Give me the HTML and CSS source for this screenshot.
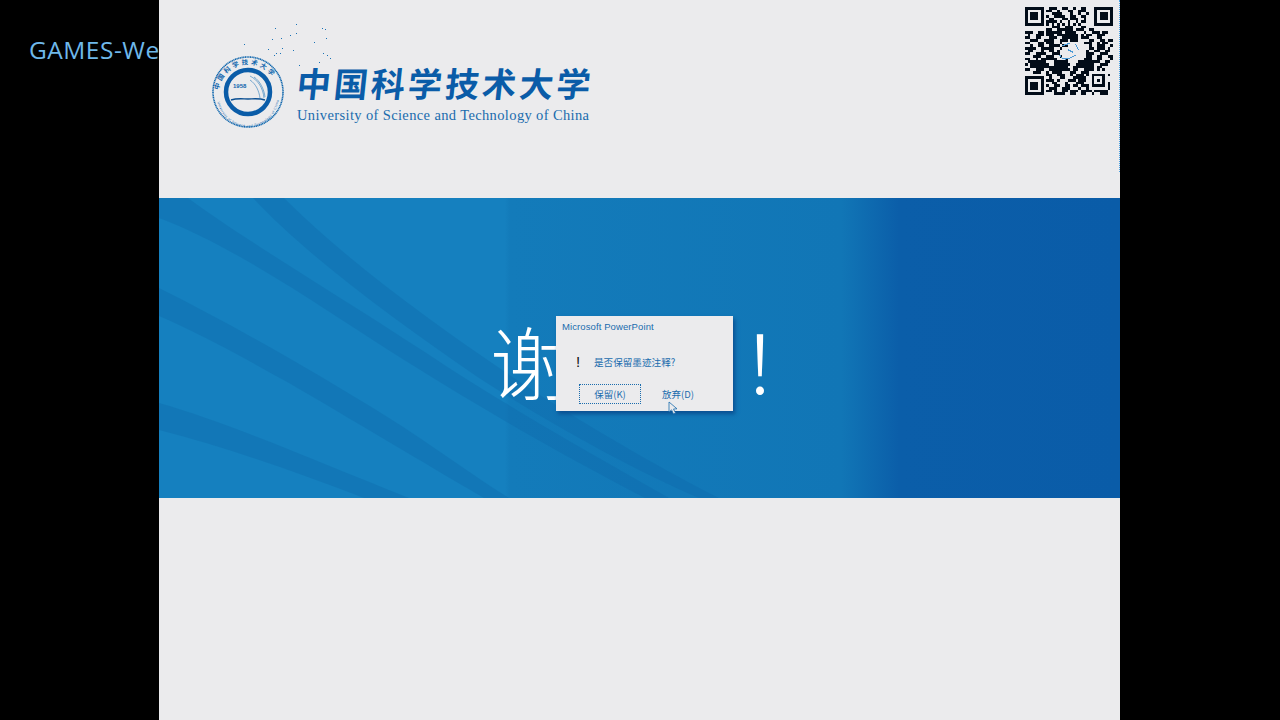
FILE: index.html
```html
<!DOCTYPE html>
<html lang="zh">
<head>
<meta charset="utf-8">
<title>GAMES-Webinar</title>
<link rel="stylesheet" href="styles.css">
</head>
<body>
<div class="stage">
  <aside class="side"><span class="side-title">GAMES-Webinar</span></aside>
  <main class="slide">
    <header class="slide-head">
      <div class="logo">
        <svg class="seal" viewBox="0 0 72 72" aria-hidden="true">
          <defs>
            <path id="sealTop" d="M6.500 38a29.500 29.500 0 1 1 59 0"/>
            <path id="sealBottom" d="M5 40a31 31 0 0 0 62 0"/>
          </defs>
          <circle cx="36" cy="36" r="35" class="seal-line"/>
          <circle cx="36" cy="36" r="22" class="seal-line-thin"/>
          <text class="seal-text"><textPath href="#sealTop" startOffset="4">中国科学技术大学</textPath></text>
          <text class="seal-text-en"><textPath href="#sealBottom" startOffset="6">University of Science and Technology of China</textPath></text>
          <text x="21" y="32" class="seal-year">1958</text>
          <path class="seal-wave" d="M19 44c6-2 12-1 17-1s11-1 17 1"/>
          <path class="seal-rays" d="M38 20c8 4 13 12 14 22M42 21c6 4 10 12 11 20M38 24c6 4 9 11 10 18"/>
        </svg>
        <div class="logo-words">
          <div class="logo-cn">中国科学技术大学</div>
          <div class="logo-en">University of Science and Technology of China</div>
        </div>
        <svg class="sparkles" viewBox="0 0 90 50" aria-hidden="true">
          <path d="M33 8h1v1h-1zM54 4h1v1h-1zM54 13h1v1h-1zM48 15h1v1h-1zM39 18h1v1h-1zM30 19h1v1h-1zM2 24h1v1H2zM26 29h1v1h-1zM40 28h1v1h-1zM38 33h1v1h-1zM34 33h1v1h-1zM32 35h1v1h-1zM51 30h1v1h-1zM72 22h1v1h-1zM80 8h1v1h-1zM83 9h1v1h-1zM84 18h1v1h-1zM81 33h1v1h-1zM85 35h1v1h-1zM88 38h1v1h-1zM77 42h1v1h-1zM57 45h1v1h-1z"/>
        </svg>
      </div>
      <div class="qr-box">
        <svg class="qr" viewBox="0 0 33 33" shape-rendering="crispEdges" aria-hidden="true">
          <path class="qr-finder" d="M0 0h7v7H0zM1 1v5h5V1zM2 2h3v3H2zM26 0h7v7h-7zM27 1v5h5V1zM28 2h3v3h-3zM0 26h7v7H0zM1 27v5h5v-5zM2 28h3v3H2z" fill-rule="evenodd"/>
          <path class="qr-data" d="M9 .5h3m2 0h2m2 0h1m2 0h2M8 1.500h2m2 0h1m3 0h2m2 0h3M10 2.500h4m3 0h1m2 0h1m2 0h1M8 3.500h1m2 0h4m2 0h2m2 0h2M9 4.500h2m3 0h2m1 0h3m2 0h1M8 5.500h4m1 0h1m2 0h1m2 0h1m1 0h2M8 6.500h1m1 0h1m1 0h1m1 0h1m1 0h1m1 0h1m1 0h1M10 7.500h3m2 0h3m3 0h2M8 8.500h2m2 0h4m3 0h3m2 0h2M0 9.500h3m2 0h2m2 0h5m3 0h2m3 0h1m2 0h3m1 0h2M1 10.500h1m2 0h3m2 0h2m1 0h6m3 0h1m1 0h2m2 0h3M0 11.500h2m2 0h2m3 0h3m2 0h4m3 0h3m3 0h2M2 12.500h3m2 0h4m2 0h3m8 0h2m2 0h2m1 0h2M0 13.500h2m3 0h2m1 0h3m2 0h1m8 0h3m2 0h1m1 0h2M2 14.500h1m2 0h2m2 0h4m1 0h2m8 0h1m2 0h3m2 0h2M0 15.500h4m2 0h5m2 0h1m10 0h2m1 0h3m1 0h1M1 16.500h2m3 0h1m2 0h2m1 0h1m10 0h1m2 0h2m2 0h2M0 17.500h2m2 0h4m2 0h3m10 0h3m2 0h3M3 18.500h3m2 0h3m2 0h1m9 0h2m2 0h2m2 0h3M0 19.500h2m2 0h1m1 0h6m3 0h1m6 0h3m2 0h2m3 0h1M1 20.500h2m2 0h3m3 0h5m4 0h2m2 0h4m2 0h2M0 21.500h1m2 0h2m2 0h2m2 0h6m2 0h3m1 0h3m2 0h3M2 22.500h3m3 0h3m2 0h3m2 0h4m2 0h2m1 0h2M0 23.500h2m2 0h3m2 0h2m2 0h4m1 0h2m2 0h4m1 0h1m1 0h1M3 24.500h3m2 0h1m2 0h3m3 0h2m2 0h3m2 0h3M8 25.500h2m2 0h3m2 0h1m1 0h3m1 0h3m3 0h3M9 26.500h1m3 0h2m3 0h4m2 0h1m3 0h1m1 0h1M8 27.500h3m1 0h1m3 0h3m2 0h2m1 0h1m1 0h1m1 0h3M10 28.500h2m3 0h1m3 0h3m2 0h1m3 0h1m1 0h2M8 29.500h1m2 0h2m2 0h2m1 0h2m1 0h4m1 0h3m2 0h1M9 30.500h3m2 0h3m3 0h1m2 0h2m2 0h2m2 0h1M8 31.500h2m1 0h1m2 0h2m1 0h3m1 0h4m1 0h5M11 32.500h4m2 0h2m2 0h2m2 0h1m2 0h3"/>
          <path class="qr-finder" d="M15 7h3v5h-3zM17 10h3v3h-3zM2 20h6v3H2zM21 20h5v3h-5zM8 9h3v2H8zM10 22h3v3h-3zM20 26h3v2h-3z"/>
          <rect class="qr-clear" x="24" y="24" width="7" height="7"/>
          <path class="qr-finder" d="M25 25h5v5h-5zM26 26v3h3v-3zM27 27h1v1h-1z" fill-rule="evenodd"/>
          <path class="qr-mark" d="M14 14.500l3-1M13 18c1 2 3 2 6 0M16 16l2 1M19 14l1 2"/>
        </svg>
      </div>
    </header>
    <section class="band">
      <svg class="band-art" viewBox="0 0 961 300" preserveAspectRatio="none" aria-hidden="true">
        <path class="stripe" d="M0 0H29C90 45 200 110 290 170C360 215 440 260 510 300H486C400 255 330 215 250 165C170 115 80 50 0 20Z"/>
        <path class="stripe" d="M94 0H125C190 65 280 130 370 190C440 235 510 275 560 300H540C470 270 390 225 320 180C240 125 150 60 94 0Z"/>
        <path class="stripe" d="M0 90C70 125 150 170 230 220C270 245 310 275 350 300H325C265 265 190 220 130 185C85 160 40 135 0 118Z"/>
        <path class="stripe" d="M0 205C70 225 150 260 250 300H205C140 275 70 250 0 232Z"/>
      </svg>
      <div class="thanks">谢谢！</div>
      <div class="dialog">
        <div class="dialog-title">Microsoft PowerPoint</div>
        <div class="dialog-msg">
          <span class="dialog-mark">!</span>
          <span>是否保留墨迹注释?</span>
        </div>
        <div class="dialog-actions">
          <span class="btn btn-default">保留(K)</span>
          <span class="btn">放弃(D)</span>
        </div>
        <svg class="cursor" viewBox="0 0 10 14" aria-hidden="true">
          <path d="M1 1v10l2.500-2.200L5.500 13l2-1-2-4 3.500-.2z"/>
        </svg>
      </div>
    </section>
    <div class="slide-foot"></div>
  </main>
</div>
</body>
</html>
```
FILE: styles.css
```css
* { box-sizing: border-box; }
html, body { margin: 0; height: 100%; background: #000; }
.stage { display: flex; width: 1280px; height: 720px; overflow: hidden; background: #000; }
.side { width: 159px; flex: none; overflow: hidden; padding: 33px 0 0 29px; white-space: nowrap; }
.side-title { font: 24.500px/34px "Open Sans", "Liberation Sans", sans-serif; color: #6fb8ea; letter-spacing: .5px; }
.slide { width: 961px; flex: none; display: flex; flex-direction: column; background: #ebebed; }
.slide-head { position: relative; height: 198px; flex: none; display: flex; justify-content: space-between; align-items: flex-start; padding-left: 53px; }
.logo { display: flex; align-items: flex-start; gap: 13px; padding-top: 56px; }
.seal { width: 72px; height: 72px; flex: none; }
.seal-line { fill: none; stroke: #0f66ad; stroke-width: 1.6; stroke-dasharray: 1.200 .5; }
.seal-line-thin { fill: #ebebed; stroke: #0a5ca8; stroke-width: 4.500; }
.seal-text { font: 700 6.500px "Noto Sans CJK SC", sans-serif; fill: #0f66ad; letter-spacing: 2.500px; }
.seal-text-en { font: 3.300px "Liberation Sans", sans-serif; fill: #0f66ad; letter-spacing: .42px; }
.seal-year { font: 700 6px "Liberation Sans", sans-serif; fill: #0f66ad; }
.seal-wave { fill: none; stroke: #0a4f92; stroke-width: 1.400; }
.seal-rays { fill: none; stroke: #2a7ab8; stroke-width: .6; }
.logo-words { display: flex; flex-direction: column; padding-top: 7px; }
.logo-cn { font: 700 34px/40px "Noto Sans CJK SC", sans-serif; color: #0a5ca8; letter-spacing: 3.100px; white-space: nowrap; transform: skewX(-6deg); }
.logo-en { font: 14.500px/18px "Liberation Serif", serif; color: #1a6cad; white-space: nowrap; letter-spacing: .37px; margin-top: 3px; }
.sparkles { position: absolute; left: 83px; top: 20px; width: 90px; height: 50px; fill: #1a72b5; }
.qr-box { height: 172px; padding: 7px 6px 0 0; border-right: 1px dotted #4a9fe0; }
.qr { display: block; width: 88px; height: 88px; filter: drop-shadow(.8px .8px 0 #1578c4); }
.qr-finder { fill: #020c18; }
.qr-data { fill: none; stroke: #020c18; stroke-width: 1; }
.qr-clear { fill: #ebebed; }
.qr-mark { fill: none; stroke: #4a9ad6; stroke-width: .4; }
.band { position: relative; height: 300px; flex: none; overflow: hidden; background: linear-gradient(90deg, #1580bf 0, #1580bf 36%, #137bba 36.500%, #1176b6 71%, #0b5ea9 77%, #0a5ca8 100%); }
.band-art { position: absolute; inset: 0; width: 100%; height: 100%; }
.stripe { fill: #0d66aa; opacity: .35; }
.thanks { position: absolute; left: 331px; top: 116px; font: 300 80px/90px "Noto Sans CJK SC", sans-serif; color: #fff; letter-spacing: 45px; white-space: nowrap; }
.dialog { position: absolute; left: 397px; top: 118px; width: 177px; height: 95px; display: flex; flex-direction: column; background: #ebebed; color: #1a6cad; box-shadow: 2px 3px 4px #0a4f92; font-family: "Noto Sans CJK SC", "Liberation Sans", sans-serif; }
.dialog-title { font: 9.500px/12px "Liberation Sans", sans-serif; padding: 5px 0 0 6px; letter-spacing: .1px; }
.dialog-msg { display: flex; align-items: center; font-size: 9.600px; line-height: 14px; padding: 22px 0 0 20px; gap: 15px; white-space: nowrap; }
.dialog-mark { color: #111; width: 3px; font: 15px/14px "Liberation Sans", sans-serif; }
.dialog-actions { display: flex; align-items: center; gap: 21px; padding: 15px 0 0 23px; font-size: 9.500px; line-height: 14px; white-space: nowrap; }
.btn { color: #1a6cad; }
.btn-default { width: 62px; height: 20px; display: flex; align-items: center; justify-content: center; border: 1px dotted #1a6cad; }
.cursor { position: absolute; left: 112px; top: 85px; width: 10px; height: 14px; fill: #ebebed; stroke: #1a6cad; stroke-width: .8; }
.slide-foot { flex: 1; }
```
